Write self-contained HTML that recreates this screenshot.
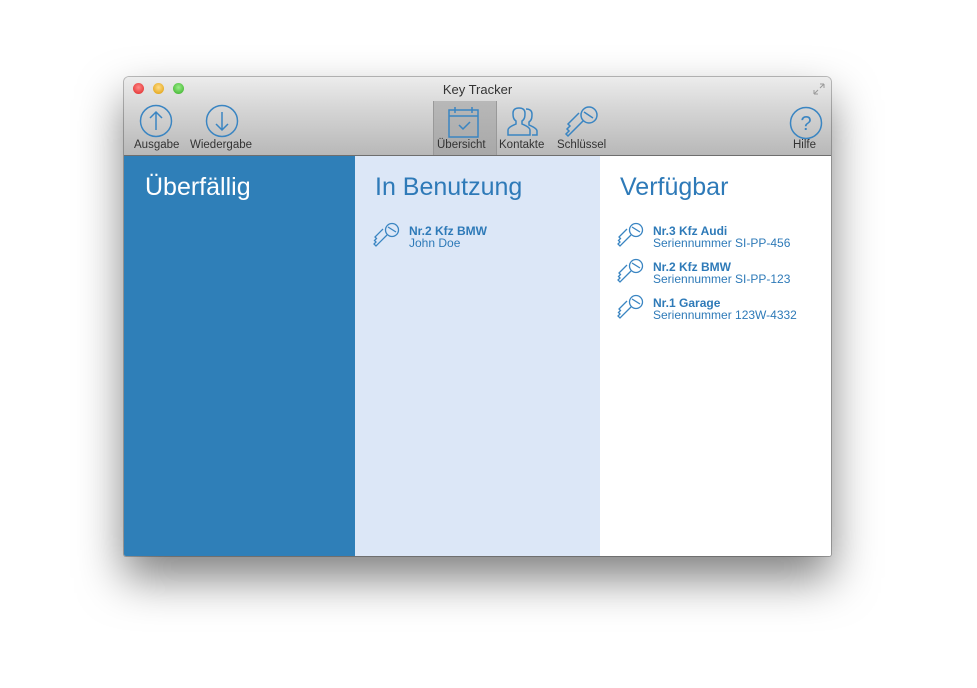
<!DOCTYPE html>
<html><head><style>
body{margin:0;width:977px;height:688px;background:#fff;position:relative;overflow:hidden;font-family:"Liberation Sans",sans-serif}
.win{position:absolute;left:124px;top:77px;width:707px;height:479px;border-radius:5px 5px 2px 2px;overflow:hidden;box-shadow:0 22px 45px rgba(0,0,0,.5),0 0 0 1px rgba(0,0,0,.25)}
.tb{position:absolute;left:0;top:0;width:707px;height:78px;background:linear-gradient(#ececec,#d6d6d6 40%,#b8b8b8);border-bottom:1px solid #6e6e6e}
.title{position:absolute;top:5px;left:0;width:707px;text-align:center;font-size:13px;color:#333}
.dot{position:absolute;top:6px;width:11px;height:11px;border-radius:50%}
.lbl{position:absolute;top:62px;font-size:11.5px;color:#333;text-align:center}
.col{position:absolute;top:79px;height:400px}
h1{font-weight:normal;font-size:25px;margin:0;position:absolute;top:17px}
.it{position:absolute;font-size:12px;color:#2e7ab8;line-height:12px}
.it b{display:block}
.it svg{position:absolute;left:-36px;top:-4px}
</style></head><body>
<div class="win">
<div class="tb">
<div class="dot" style="left:9px;background:radial-gradient(circle at 50% 40%,#f88,#d22)"></div>
<div class="dot" style="left:29px;background:radial-gradient(circle at 50% 40%,#fd8,#d90)"></div>
<div class="dot" style="left:49px;background:radial-gradient(circle at 50% 40%,#9e8,#3a2)"></div>
<div class="title">Key Tracker</div>
<svg style="position:absolute;left:688px;top:5px" width="14" height="14"><path d="M2 12l4-4M2 12h4M2 12V8M12 2l-4 4M12 2H8M12 2v4" stroke="#999" fill="none"/></svg>
<svg style="position:absolute;left:15px;top:27px" width="36" height="36"><circle cx="17" cy="17" r="15.5" stroke="#3a85c2" stroke-width="1.5" fill="none"/><path d="M17 26V8M11 14l6-6 6 6" stroke="#3a85c2" stroke-width="1.5" fill="none"/></svg>
<div class="lbl" style="left:10px">Ausgabe</div>
<svg style="position:absolute;left:81px;top:27px" width="36" height="36"><circle cx="17" cy="17" r="15.5" stroke="#3a85c2" stroke-width="1.5" fill="none"/><path d="M17 8v18M11 20l6 6 6-6" stroke="#3a85c2" stroke-width="1.5" fill="none"/></svg>
<div class="lbl" style="left:66px">Wiedergabe</div>
<div style="position:absolute;left:309px;top:24px;width:62px;height:54px;background:linear-gradient(#b8b8b8,#a8a8a8);border-left:1px solid #999;border-right:1px solid #999"></div>
<svg style="position:absolute;left:323px;top:28px" width="34" height="34"><rect x="2" y="5" width="29" height="27" stroke="#3a85c2" stroke-width="1.5" fill="none"/><path d="M2 11h29M8 2v6M25 2v6M12 20l4 4 7-7" stroke="#3a85c2" stroke-width="1.5" fill="none"/></svg>
<div class="lbl" style="left:313px">Übersicht</div>
<svg style="position:absolute;left:382px;top:30px" width="36" height="30"><path d="M2 28v-5c0-3 6-5 8-6v-3c-3-2-3-5-3-8 0-3 2-5 6-5s6 2 6 5c0 3 0 6-3 8v3c2 1 8 3 8 6v5zM20 2c4 0 6 2 6 5 0 3 0 6-3 8v3c2 1 8 3 8 6v4h-5" stroke="#3a85c2" stroke-width="1.5" fill="none"/></svg>
<div class="lbl" style="left:375px">Kontakte</div>
<svg style="position:absolute;left:440px;top:28px" width="36" height="34"><circle cx="25" cy="10" r="8" stroke="#3a85c2" stroke-width="1.5" fill="none"/><path d="M20 7l9 6M19 16L4 31l-2-2 3-3-2-2 3-3-2-2 11-11" stroke="#3a85c2" stroke-width="1.5" fill="none"/></svg>
<div class="lbl" style="left:433px">Schlüssel</div>
<svg style="position:absolute;left:665px;top:29px" width="34" height="34"><circle cx="17" cy="17" r="15.5" stroke="#3a85c2" stroke-width="1.5" fill="none"/><text x="17" y="24" text-anchor="middle" font-size="20" fill="#3a85c2" font-family="Liberation Sans">?</text></svg>
<div class="lbl" style="left:669px">Hilfe</div>
</div>
<div class="col" style="left:0;width:231px;background:#2f7fb8"><h1 style="left:21px;color:#fff">Überfällig</h1></div>
<div class="col" style="left:231px;width:245px;background:#dce7f7"><h1 style="left:20px;color:#2e7ab8">In Benutzung</h1>
<div class="it" style="left:54px;top:69px"><svg width="30" height="28"><circle cx="19" cy="9" r="6.5" stroke="#3a85c2" stroke-width="1.3" fill="none"/><path d="M15 6l8 5M14 14L3 25l-2-2 2-2-1.5-1.5 2-2L2 16l8-8" stroke="#3a85c2" stroke-width="1.3" fill="none"/></svg><b>Nr.2 Kfz BMW</b>John Doe</div></div>
<div class="col" style="left:476px;width:231px;background:#fff"><h1 style="left:20px;color:#2e7ab8">Verfügbar</h1>
<div class="it" style="left:53px;top:69px"><svg width="30" height="28"><circle cx="19" cy="9" r="6.5" stroke="#3a85c2" stroke-width="1.3" fill="none"/><path d="M15 6l8 5M14 14L3 25l-2-2 2-2-1.5-1.5 2-2L2 16l8-8" stroke="#3a85c2" stroke-width="1.3" fill="none"/></svg><b>Nr.3 Kfz Audi</b>Seriennummer SI-PP-456</div>
<div class="it" style="left:53px;top:105px"><svg width="30" height="28"><circle cx="19" cy="9" r="6.5" stroke="#3a85c2" stroke-width="1.3" fill="none"/><path d="M15 6l8 5M14 14L3 25l-2-2 2-2-1.5-1.5 2-2L2 16l8-8" stroke="#3a85c2" stroke-width="1.3" fill="none"/></svg><b>Nr.2 Kfz BMW</b>Seriennummer SI-PP-123</div>
<div class="it" style="left:53px;top:141px"><svg width="30" height="28"><circle cx="19" cy="9" r="6.5" stroke="#3a85c2" stroke-width="1.3" fill="none"/><path d="M15 6l8 5M14 14L3 25l-2-2 2-2-1.5-1.5 2-2L2 16l8-8" stroke="#3a85c2" stroke-width="1.3" fill="none"/></svg><b>Nr.1 Garage</b>Seriennummer 123W-4332</div>
</div>
</div>
</body></html>
